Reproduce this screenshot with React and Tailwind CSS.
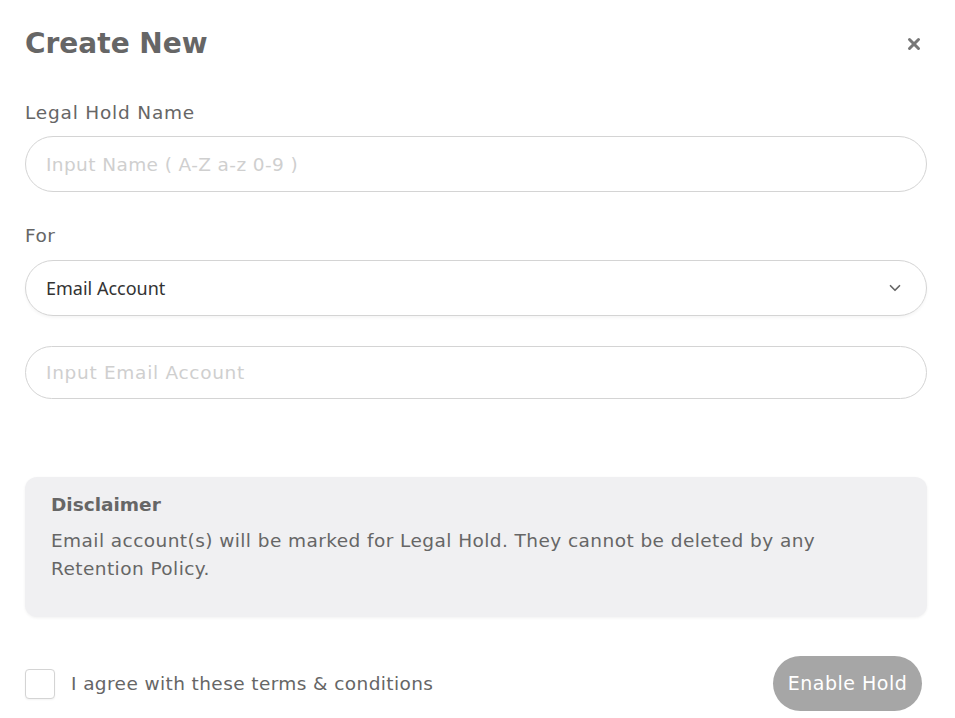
import { ChevronDown, X } from 'lucide-react';

const font = { fontFamily: '"DejaVu Sans", "Open Sans", sans-serif' };

export default function App() {
    return (
        <div className="min-h-screen bg-white pl-[25px] pr-[28px] pt-[27px] text-[#666]" style={font}>
            {/* header */}
            <div className="flex items-center justify-between">
                <h1 className="text-[28px] font-bold leading-[34px] text-[#666]">Create New</h1>
                <button className="mr-[4px] text-[#777]">
                    <X className="h-[18px] w-[18px]" strokeWidth={4} />
                </button>
            </div>

            <div className="mt-[40px] text-[18.5px] leading-[24px] tracking-[0.8px]">Legal Hold Name</div>
            <input
                className="mt-[11px] h-[56px] w-full rounded-full border border-[#d4d4d4] px-[20px] text-[18.5px] tracking-[0.4px] outline-none placeholder:text-[#cfcfcf]"
                placeholder="Input Name ( A-Z a-z 0-9 )"
            />

            <div className="mt-[32px] text-[18.5px] leading-[24px] tracking-[0.5px]">For</div>
            <div className="mt-[12px] flex h-[56px] w-full items-center justify-between rounded-full border border-[#d4d4d4] pl-[20px] pr-[22px] shadow-[0_2px_3px_rgba(0,0,0,0.04)]">
                <span className="text-[18px] text-[#333]" style={{ fontFamily: '"Noto Sans", "Open Sans", sans-serif' }}>Email Account</span>
                <ChevronDown className="h-[18px] w-[18px] text-[#666]" strokeWidth={2.25} />
            </div>

            <input
                className="mt-[30px] h-[53px] w-full rounded-full border border-[#d4d4d4] px-[20px] text-[18.5px] tracking-[0.7px] outline-none placeholder:text-[#cfcfcf]"
                placeholder="Input Email Account"
            />

            <div className="mt-[78px] h-[140px] rounded-[12px] bg-[#f0f0f2] px-[26px] pt-[16px] shadow-[0_1px_3px_rgba(0,0,0,0.06)]">
                <div className="text-[18.5px] font-bold leading-[24px] text-[#666]">Disclaimer</div>
                <p className="mt-[10px] text-[18.5px] leading-[28px] tracking-[0.43px] text-[#666]">
                    Email account(s) will be marked for Legal Hold. They cannot be deleted by any<br />Retention Policy.
                </p>
            </div>

            <div className="mt-[39px] flex items-center justify-between pr-[5px]">
                <label className="flex items-center gap-[16px]">
                    <span className="h-[30px] w-[30px] rounded-[4px] border border-[#d4d4d4] bg-white shadow-[0_1px_2px_rgba(0,0,0,0.05)]" />
                    <span className="text-[18.5px] tracking-[0.4px] text-[#666]">I agree with these terms &amp; conditions</span>
                </label>
                <button className="h-[55px] w-[149px] rounded-full bg-[#a6a6a6] text-[19px] tracking-[0.5px] text-white">Enable Hold</button>
            </div>
        </div>
    );
}
